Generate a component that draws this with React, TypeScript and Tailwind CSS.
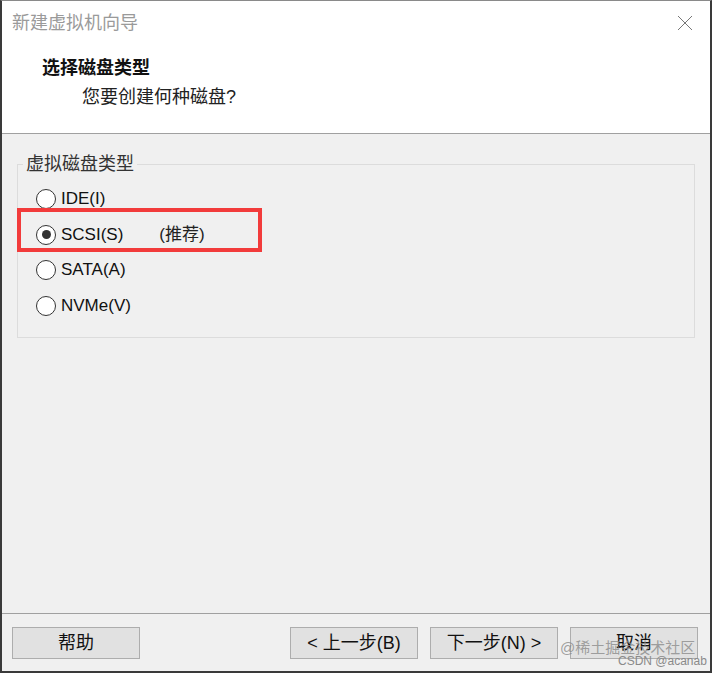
const font = "font-['Liberation_Sans','Noto_Sans_CJK_SC',sans-serif]"

const diskTypes = [
  { label: 'IDE(I)', checked: false },
  { label: 'SCSI(S)', checked: true, note: '(推荐)' },
  { label: 'SATA(A)', checked: false },
  { label: 'NVMe(V)', checked: false },
]

function Radio({ checked }: { checked: boolean }) {
  return (
    <span className="flex size-[20px] items-center justify-center rounded-full border border-[#333] bg-white">
      {checked && <span className="size-[9px] rounded-full bg-[#333]" />}
    </span>
  )
}

function WinButton({ children }: { children: React.ReactNode }) {
  return (
    <button className="flex h-[32px] w-[128px] items-center justify-center whitespace-nowrap border border-[#adadad] bg-[#e1e1e1] text-[18px] text-[#111]">
      {children}
    </button>
  )
}

export default function App() {
  return (
    <div className={`${font} flex h-[673px] w-[712px] flex-col border-x-2 border-b-2 border-t border-x-[#3a3a3a] border-b-[#3a3a3a] border-t-[#8a8a8a] bg-[#f0f0f0]`}>
      {/* title + header */}
      <div className="flex h-[133px] flex-col border-b border-[#a0a0a0] bg-white">
        <div className="flex h-[44px] items-center justify-between pl-[10px] pr-[16px]">
          <span className="text-[18px] text-[#9a9a9a]">新建虚拟机向导</span>
          <svg width="16" height="16" viewBox="0 0 16 16" className="mr-[1px]">
            <path d="M1 1L15 15M15 1L1 15" stroke="#777" strokeWidth="1" />
          </svg>
        </div>
        <div className="pl-[40px] pt-[11px] text-[18px] font-bold leading-[24px] text-[#111]">选择磁盘类型</div>
        <div className="pl-[80px] pt-[5px] text-[18px] leading-[24px] text-[#222]">您要创建何种磁盘?</div>
      </div>

      {/* body */}
      <div className="relative flex-1 px-[15px] pt-[19px]">
        <fieldset className="h-[185px] border border-[#dcdcdc] p-0">
          <legend className="ml-[5px] px-[3px] text-[18px] leading-[22px] text-[#333]">虚拟磁盘类型</legend>
          <div className="flex flex-col pl-[18px] pt-[6px]">
            {diskTypes.map((d) => (
              <label key={d.label} className="flex h-[35.7px] items-center gap-[5px]">
                <Radio checked={d.checked} />
                <span className="text-[17px] text-[#111]">{d.label}</span>
                {d.note && <span className="ml-[31px] text-[17px] text-[#222]">{d.note}</span>}
              </label>
            ))}
          </div>
        </fieldset>
        <div className="absolute left-[15px] top-[74px] h-[44px] w-[245px] border-4 border-[#f23b3b]" />
      </div>

      {/* footer */}
      <div className="relative flex h-[58px] items-start border-t border-[#a0a0a0] pl-[10px] pt-[13px]">
        <WinButton>帮助</WinButton>
        <div className="ml-[150px] flex gap-[12px]">
          <WinButton>&lt; 上一步(B)</WinButton>
          <WinButton>下一步(N) &gt;</WinButton>
          <WinButton>取消</WinButton>
        </div>
        <span className="absolute left-[558px] top-[23px] whitespace-nowrap text-[15px] text-[#8a8a8a]/80">@稀土掘金技术社区</span>
        <span className="absolute left-[616px] top-[38px] whitespace-nowrap text-[12px] text-[#8a8a8a]">CSDN @acanab</span>
      </div>
    </div>
  )
}
